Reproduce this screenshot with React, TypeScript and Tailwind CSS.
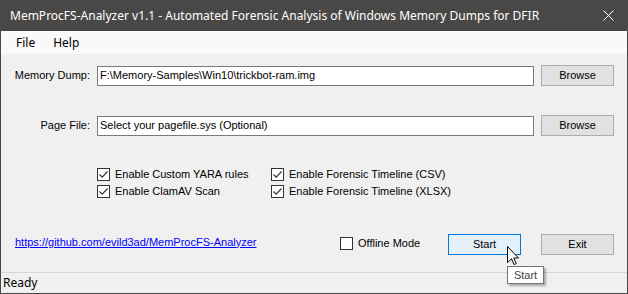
const segoe = { fontFamily: '"Noto Sans", "Open Sans", sans-serif' };

const CheckBox = ({ checked, label }: { checked: boolean; label: string }) => (
  <div className="flex items-center gap-[5px]">
    <div className="w-[13px] h-[13px] border border-[#333333] bg-white flex items-center justify-center">
      {checked && (
        <svg width="11" height="11" viewBox="0 0 11 11">
          <path d="M1.5 5.5 L4.2 8.2 L9.5 2.5" fill="none" stroke="#333333" strokeWidth="1.2" />
        </svg>
      )}
    </div>
    <span className="text-[11px] leading-[13px]">{label}</span>
  </div>
);

const Button = ({ label, focused }: { label: string; focused?: boolean }) => (
  <button
    className={
      "block w-[73px] h-[21px] text-[11px] border " +
      (focused ? "border-[#0078d7] bg-[#e5f1fb]" : "border-[#adadad] bg-[#e1e1e1]")
    }
  >
    {label}
  </button>
);

const FileRow = ({ label, value }: { label: string; value: string }) => (
  <div className="flex items-center h-[21px]">
    <div className="w-[89px] text-right text-[11px]">{label}</div>
    <div className="ml-[7px] w-[437px] h-[20px] border border-[#7a7a7a] bg-white flex items-center px-[2px] text-[11px]">
      {value}
    </div>
    <div className="ml-[7px] flex">
      <Button label="Browse" />
    </div>
  </div>
);

export default function App() {
  return (
    <div
      className="relative w-[628px] h-[294px] flex flex-col bg-[#f0f0f0] text-black overflow-hidden"
      style={{ fontFamily: '"Liberation Sans", Arial, sans-serif' }}
    >
      {/* title bar */}
      <div className="h-[31px] shrink-0 bg-[#4a4846] flex items-center pl-[10px] pr-[14px] text-white text-[12px]" style={segoe}>
        <span className="flex-1 whitespace-nowrap">
          MemProcFS-Analyzer v1.1 - Automated Forensic Analysis of Windows Memory Dumps for DFIR
        </span>
        <svg width="11" height="11" viewBox="0 0 11 11">
          <path d="M0.5 0.5 L10.5 10.5 M10.5 0.5 L0.5 10.5" stroke="white" strokeWidth="1" />
        </svg>
      </div>

      <div className="flex-1 flex flex-col border-x border-b border-[#4a4846]">
        {/* menu */}
        <div className="h-[23px] shrink-0 bg-[#f9f9f9] flex items-center gap-[18px] pl-[15px] text-[12px]" style={segoe}>
          <span>File</span>
          <span>Help</span>
        </div>

        <div className="flex-1 flex flex-col">
          <div className="mt-[11px]">
            <FileRow label="Memory Dump:" value="F:\Memory-Samples\Win10\trickbot-ram.img" />
          </div>
          <div className="mt-[29px]">
            <FileRow label="Page File:" value="Select your pagefile.sys (Optional)" />
          </div>

          <div className="mt-[32px] ml-[96px] grid grid-cols-[174px_auto] gap-y-[4px]">
            <CheckBox checked label="Enable Custom YARA rules" />
            <CheckBox checked label="Enable Forensic Timeline (CSV)" />
            <CheckBox checked label="Enable ClamAV Scan" />
            <CheckBox checked label="Enable Forensic Timeline (XLSX)" />
          </div>

          <div className="mt-[36px] flex items-center h-[21px]">
            <a className="ml-[14px] -mt-[5px] text-[11px] leading-[13px] text-[#0000ff] underline w-[325px]">
              https://github.com/evild3ad/MemProcFS-Analyzer
            </a>
            <div className="-mt-[3px] w-[108px]">
              <CheckBox checked={false} label="Offline Mode" />
            </div>
            <div className="flex">
              <Button label="Start" focused />
            </div>
            <div className="ml-[20px] flex">
              <Button label="Exit" />
            </div>
          </div>
        </div>

        {/* status bar */}
        <div className="h-[21px] shrink-0 border-t border-[#d7d7d7] flex items-center pl-[2px] text-[12px]" style={segoe}>
          Ready
        </div>
      </div>

      {/* tooltip */}
      <div className="absolute left-[507px] top-[266px] w-[37px] h-[18px] bg-white border border-[#767676] shadow-[2px_2px_2px_rgba(0,0,0,0.3)] flex items-center justify-center text-[11px] text-[#444444]">
        Start
      </div>

      {/* mouse cursor */}
      <svg className="absolute left-[507px] top-[246px]" width="13" height="20" viewBox="0 0 13 20">
        <path d="M0.5 0.5 L0.5 16.5 L4.5 12.8 L7 18.5 L9.2 17.6 L6.8 12 L11.5 12 Z" fill="white" stroke="black" strokeWidth="1" />
      </svg>
    </div>
  );
}
